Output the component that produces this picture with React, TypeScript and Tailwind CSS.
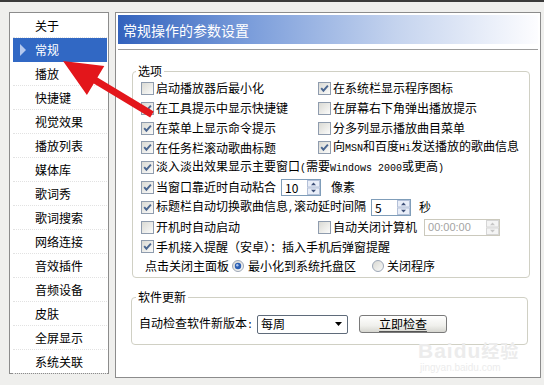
import React from 'react';

const FONT = "font-['Noto_Sans_CJK_SC','Noto_Sans',sans-serif]";

function M({ children }: { children: React.ReactNode }) {
  return <span className="font-['Liberation_Mono',monospace] text-[10px]">{children}</span>;
}

function Check({ on }: { on?: boolean }) {
  return (
    <svg width="13" height="13" viewBox="0 0 13 13" className="block shrink-0">
      <defs>
        <linearGradient id="cbg" x1="0" y1="0" x2="1" y2="1">
          <stop offset="0" stopColor="#d8d8d2" />
          <stop offset="1" stopColor="#fdfdfc" />
        </linearGradient>
      </defs>
      <rect x="0.5" y="0.5" width="12" height="12" fill="url(#cbg)" stroke="#8f9cae" />
      {on && <path d="M3.2 6.2 L5.4 8.7 L9.9 3.7" fill="none" stroke="#4a6690" strokeWidth="1.9" />}
    </svg>
  );
}

function Radio({ on }: { on?: boolean }) {
  return (
    <svg width="12" height="12" viewBox="0 0 12 12" className="block shrink-0">
      <defs>
        <linearGradient id="rbg" x1="0" y1="0" x2="1" y2="1">
          <stop offset="0" stopColor="#d6d6d0" />
          <stop offset="1" stopColor="#fbfbfa" />
        </linearGradient>
      </defs>
      <circle cx="6" cy="6" r="5.5" fill="url(#rbg)" stroke="#9ba6b6" />
      {on && (
        <>
          <circle cx="6" cy="6" r="3.2" fill="#2c5fb3" />
          <circle cx="5.3" cy="5.2" r="1.2" fill="#a9c5ef" />
        </>
      )}
    </svg>
  );
}

function SpinBtns({ disabled }: { disabled?: boolean }) {
  const s = disabled ? '#d6d6d6' : '#b3c0d8';
  const bg = disabled ? '#f4f4f4' : '#e9eef8';
  const a = disabled ? '#c6c6c6' : '#3e5078';
  return (
    <svg width="13" height="15" viewBox="0 0 13 15" className="block shrink-0">
      <rect x="0.5" y="0.5" width="12" height="6.5" fill={bg} stroke={s} />
      <rect x="0.5" y="8" width="12" height="6.5" fill={bg} stroke={s} />
      <path d="M4 5.2 L6.5 2.6 L9 5.2Z" fill={a} />
      <path d="M4 9.8 L6.5 12.4 L9 9.8Z" fill={a} />
    </svg>
  );
}

function Spin({ value, className, disabled }: { value: string; className: string; disabled?: boolean }) {
  return (
    <div
      className={`flex h-[17px] items-center bg-white border ${
        disabled ? 'border-[#cbc9bd]' : 'border-[#7f9db9]'
      } ${className}`}
    >
      <span
        className={`flex-1 pl-[3px] leading-[15px] ${
          disabled ? "text-[#a3a3a3] font-['Liberation_Sans',sans-serif] text-[11px]" : 'text-[12px]'
        }`}
      >
        {value}
      </span>
      <SpinBtns disabled={disabled} />
    </div>
  );
}

function Opt({ on, children }: { on?: boolean; children: React.ReactNode }) {
  return (
    <div className="flex items-center gap-[2px] leading-[14px] whitespace-nowrap">
      <Check on={on} />
      <span>{children}</span>
    </div>
  );
}

const items = [
  '关于',
  '常规',
  '播放',
  '快捷键',
  '视觉效果',
  '播放列表',
  '媒体库',
  '歌词秀',
  '歌词搜索',
  '网络连接',
  '音效插件',
  '音频设备',
  '皮肤',
  '全屏显示',
  '系统关联',
];

function Sidebar() {
  return (
    <div className="w-[100px] h-[362px] border border-[#8c8c8c] bg-white pt-[1px] shrink-0">
      {items.map((t, i) =>
        i === 1 ? (
          <div key={t} className="h-[24px] ml-[3px] mr-[1px] flex items-center pl-[7px] bg-[#3168c4] text-white">
            <svg width="6" height="12" viewBox="0 0 6 12" className="block">
              <path d="M0 0 L6 6 L0 12Z" fill="#b4c8ee" />
            </svg>
            <span className="ml-[9px] leading-[14px]">{t}</span>
          </div>
        ) : (
          <div
            key={t}
            className="h-[24px] ml-[3px] mr-[1px] flex items-center pl-[22px] leading-[14px] border-b border-dotted border-[#e2e2e2]"
          >
            {t}
          </div>
        )
      )}
    </div>
  );
}

function Main() {
  return (
    <div className="ml-[6px] w-[426px] h-[366px] border border-[#8c8c8c] bg-white p-[2px] flex flex-col shrink-0">
      <div className="h-[29px] flex items-center pl-[5px] text-[14px] leading-[16px] text-white bg-[linear-gradient(to_right,#3262bd_0%,#7c9edb_32%,#c4d3ee_66%,#fdfdff_100%)]">
        常规操作的参数设置
      </div>
      <div className="mt-[5px] h-px bg-[#9c9c9c]" />

      <div className="relative mt-[21px] ml-[14px] w-[398px] h-[207px] rounded-[4px] border border-[#d0d0c4] pl-[8px] pt-[6px]">
        <span className="absolute -top-[9px] left-[3px] bg-white px-[2px] leading-[16px]">选项</span>

        <div className="grid grid-cols-[177px_1fr] h-[20px] items-center">
          <Opt>启动播放器后最小化</Opt>
          <Opt on>在系统栏显示程序图标</Opt>
        </div>
        <div className="grid grid-cols-[177px_1fr] h-[20px] items-center">
          <Opt on>在工具提示中显示快捷键</Opt>
          <Opt>在屏幕右下角弹出播放提示</Opt>
        </div>
        <div className="grid grid-cols-[177px_1fr] h-[20px] items-center">
          <Opt on>在菜单上显示命令提示</Opt>
          <Opt>分多列显示播放曲目菜单</Opt>
        </div>
        <div className="grid grid-cols-[177px_1fr] h-[19px] items-center">
          <Opt on>在任务栏滚动歌曲标题</Opt>
          <Opt on>
            向<M>MSN</M>和百度<M>Hi</M>发送播放的歌曲信息
          </Opt>
        </div>
        <div className="flex h-[20px] items-center">
          <Opt on>
            淡入淡出效果显示主要窗口<M>(</M>需要<M>Windows 2000</M>或更高<M>)</M>
          </Opt>
        </div>
        <div className="flex h-[20px] items-center">
          <Opt on>当窗口靠近时自动粘合</Opt>
          <Spin value="10" className="ml-[5px] w-[40px]" />
          <span className="ml-[10px] leading-[14px]">像素</span>
        </div>
        <div className="flex h-[20px] items-center">
          <Opt on>
            标题栏自动切换歌曲信息<M>,</M>滚动延时间隔
          </Opt>
          <Spin value="5" className="ml-[5px] w-[40px]" />
          <span className="ml-[8px] leading-[14px]">秒</span>
        </div>
        <div className="grid grid-cols-[177px_1fr] h-[20px] items-center">
          <Opt>开机时自动启动</Opt>
          <div className="flex items-center">
            <Opt>自动关闭计算机</Opt>
            <Spin value="00:00:00" className="ml-[7px] w-[76px]" disabled />
          </div>
        </div>
        <div className="flex h-[19px] items-center">
          <Opt on>手机接入提醒（安卓）：插入手机后弹窗提醒</Opt>
        </div>
        <div className="flex h-[20px] items-center leading-[14px] whitespace-nowrap">
          <span className="ml-[4px]">点击关闭主面板</span>
          <span className="ml-[3px]">
            <Radio on />
          </span>
          <span className="ml-[4px]">最小化到系统托盘区</span>
          <span className="ml-[16px]">
            <Radio />
          </span>
          <span className="ml-[3px]">关闭程序</span>
        </div>
      </div>

      <div className="relative mt-[19px] ml-[13px] w-[397px] h-[48px] rounded-[4px] border border-[#d0d0c4] pl-[7px] pt-[16px]">
        <span className="absolute -top-[9px] left-[4px] bg-white px-[2px] leading-[16px]">软件更新</span>
        <div className="flex h-[20px] items-center whitespace-nowrap">
          <span className="leading-[14px]">
            自动检查软件新版本<M>:</M>
          </span>
          <div className="ml-[4px] w-[91px] h-[19px] rounded-[2px] border border-[#5f6b7a] bg-white flex items-center justify-between pl-[3px] pr-[5px]">
            <span className="leading-[14px]">每周</span>
            <svg width="7" height="4" viewBox="0 0 7 4" className="block">
              <path d="M0 0 L7 0 L3.5 4Z" fill="#000" />
            </svg>
          </div>
          <div className="ml-[11px] w-[88px] h-[18px] rounded-[3px] border border-[#7a7a7a] bg-[linear-gradient(to_bottom,#ffffff,#f0f0ec_60%,#d6d6d0)] flex items-center justify-center">
            <span className="leading-[14px] underline underline-offset-2 decoration-[#555]">立即检查</span>
          </div>
        </div>
      </div>
    </div>
  );
}

export default function App() {
  return (
    <div className={`relative w-[544px] h-[385px] overflow-hidden bg-[#efefed] text-[12px] text-black ${FONT}`}>
      <div className="h-[2px] bg-[#3b3b3b]" />
      <div className="flex pt-[10px] pl-[9px]">
        <Sidebar />
        <Main />
      </div>

      <div className="absolute left-[418px] top-[339px] pointer-events-none text-[#ececec] select-none">
        <div className="font-['Liberation_Sans',sans-serif] font-bold text-[21px] leading-[22px] tracking-[1px]">
          Baidu<span className={`${FONT} text-[18px]`}>经验</span>
        </div>
        <div className="font-['Liberation_Sans',sans-serif] text-[10px] leading-[12px] pl-[2px]">jingyan.baidu.com</div>
      </div>

      <svg
        className="absolute left-0 top-0 pointer-events-none"
        width="544"
        height="385"
        viewBox="0 0 544 385"
      >
        <polygon
          points="63,61 104.3,65.9 97.4,77.5 153.8,111.4 150.2,117.4 93.8,83.5 86.9,95.1"
          fill="#e3161b"
        />
      </svg>
    </div>
  );
}
